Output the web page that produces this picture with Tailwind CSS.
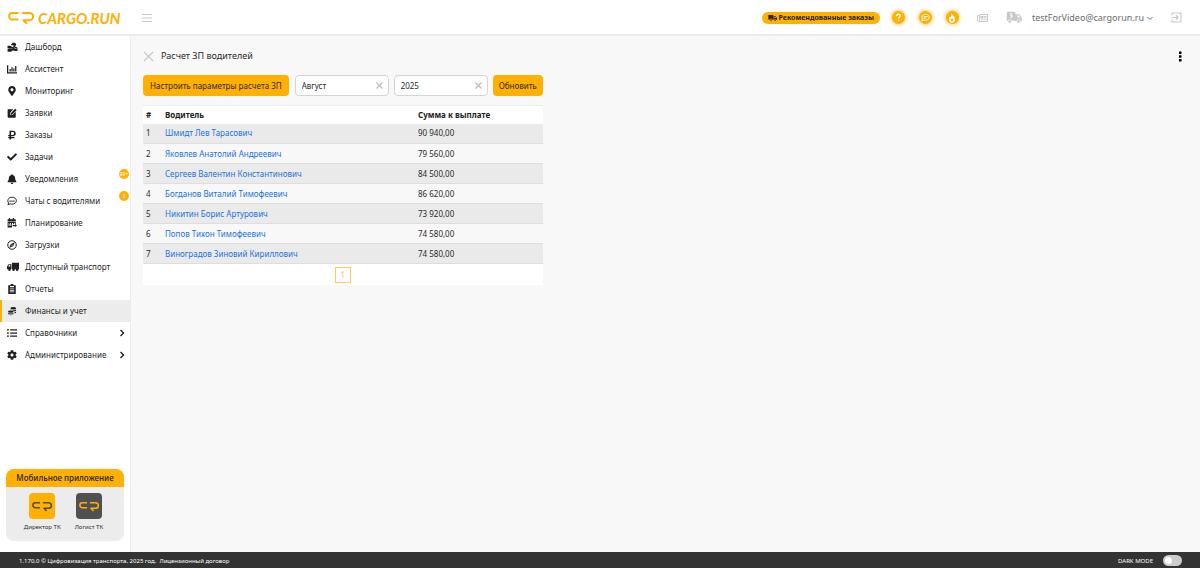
<!DOCTYPE html>
<html lang="ru">
  <head>
    <meta charset="UTF-8" />
    <meta name="viewport" content="width=device-width, initial-scale=1.0" />
    <title>Расчет ЗП водителей | CARGO.RUN</title>
    <script src="https://cdn.jsdelivr.net/npm/@tailwindcss/browser@4"></script>
  </head>

  <body class="min-h-screen flex flex-col bg-[#f8f8f8] font-['Noto_Sans',sans-serif] text-[8px] leading-[12px] text-[#2b2b2b]">
    <!-- Shared shapes -->
    <svg class="hidden">
      <symbol id="mark" viewBox="0 0 26 14">
        <path d="M10.500 2H4.200a3 3 0 0 0-3 3v.600a3 3 0 0 0 3 3h6.300M14.200 2H21.500a3.500 3.500 0 0 1 0 7.200H15.500l3.500 3.600" fill="none" stroke="currentColor" stroke-width="2" stroke-linecap="butt" stroke-linejoin="round" />
      </symbol>
      <symbol id="truck" viewBox="0 0 24 20">
        <path d="M1 2h13v12h-3a3 3 0 0 0-6 0H1zM15 5h5l4 5v5h-2a3 3 0 0 0-6 0h-1zM17 7v3h5l-2.500-3z" fill-rule="evenodd" fill="currentColor" />
        <circle cx="8" cy="15.500" r="2.200" fill="currentColor" />
        <circle cx="19" cy="15.500" r="2.200" fill="currentColor" />
      </symbol>
    </svg>

    <!-- Header -->
    <header class="h-9 shrink-0 flex items-center bg-white border-b-2 border-[#ececec] pt-px pl-2 pr-[18px] text-[#c8c8c8]">
      <a href="#" class="flex items-center gap-1 text-[#fdb000]">
        <svg class="w-[26px] h-[14px]"><use href="#mark" /></svg>
        <span class="w-[86px] font-['Lato',sans-serif] font-bold italic text-[15px] leading-[16px]">CARGO.RUN</span>
      </a>
      <button class="ml-[18px]" aria-label="Меню">
        <svg class="w-[10px] h-[10px]" viewBox="0 0 10 10" fill="none" stroke="currentColor" stroke-width="1.200"><path d="M0 1.500h10M0 5h10M0 8.500h10" /></svg>
      </button>

      <div class="ml-auto flex items-center">
        <button class="h-3 flex items-center gap-[2px] px-[6px] rounded-full bg-[#ffb000] text-[#222] text-[7px] font-bold leading-[12px] whitespace-nowrap">
          <svg class="w-[9px] h-[8px]"><use href="#truck" /></svg>
          Рекомендованные заказы
        </button>
        <button class="ml-3 size-[13px] rounded-full bg-[#ffb000] text-white shadow-[0_0_4px_#ffb000] flex items-center justify-center" aria-label="Помощь">
          <svg class="size-[9px]" viewBox="0 0 10 10" fill="none" stroke="currentColor" stroke-width="1.600"><path d="M3 3.400C3 .6 7.200.8 7 3.200 6.900 4.600 5 4.600 5 6.300M5 7.500v1.500" /></svg>
        </button>
        <button class="ml-[14px] size-[13px] rounded-full bg-[#ffb000] text-white shadow-[0_0_4px_#ffb000] flex items-center justify-center" aria-label="Чат">
          <svg class="size-[9px]" viewBox="0 0 16 16" fill="none" stroke="currentColor" stroke-width="1.700"><path d="M8 2c4 0 6.500 2.300 6.500 5.500S12 13 8 13c-1 0-2-.2-3-.5L1.500 14l1-3.500C.2 6 3 2 8 2z" /><path d="M4.500 6.200h7M4.500 9h5" /></svg>
        </button>
        <button class="ml-[14px] size-[13px] rounded-full bg-[#ffb000] text-white shadow-[0_0_4px_#ffb000] flex items-center justify-center" aria-label="Новинки">
          <svg class="size-[10px]" viewBox="0 0 16 16" fill="currentColor"><path fill-rule="evenodd" d="M7 0c1 3 6 5 6 10a5 5.500 0 0 1-10 0c0-2 1-3.500 2-4.500L6 7c1-2 1.500-4 1-7zM8 8c-1 1.500-2 2.200-2 3.500a2 2 0 0 0 4 0C10 10.200 9 9.500 8 8z" /></svg>
        </button>
        <button class="ml-[18px]" aria-label="Новости">
          <svg class="w-[11px] h-[10px]" viewBox="0 0 22 18"><path d="M5 2h16v14H4c-2 0-3-1-3-3V4h4v9c0 2-1 3-2 3" fill="none" stroke="currentColor" stroke-width="2" /><path d="M7 5h6v5H7zM14 5h5v1.800h-5zM14 8.200h5V10h-5zM7 11.800h12v1.800H7z" fill="currentColor" /></svg>
        </button>
        <button class="ml-[18px]" aria-label="Транспорт">
          <svg class="w-4 h-[13px]" viewBox="0 0 24 20"><path d="M2 1h11l1 1v13H1V2zM14 5h6l4 5v6H14zM17 7v3h5l-2.500-3z" fill-rule="evenodd" fill="currentColor" /><circle cx="5.500" cy="16" r="2.700" fill="currentColor" stroke="#fff" /><circle cx="19" cy="16" r="2.700" fill="currentColor" stroke="#fff" /><path d="M9.500 4.500H6.500v2.500h3v2.500H5.500M7.700 3v8" fill="none" stroke="#fff" /></svg>
        </button>
        <button class="ml-[10px] flex items-center gap-[3px] text-[9px] leading-[14px] text-[#6b6b6b]">
          testForVideo@cargorun.ru
          <svg class="size-[6px]" viewBox="0 0 6 6" fill="none" stroke="currentColor"><path d="M.5 2L3 4.500 5.500 2" /></svg>
        </button>
        <button class="ml-[18px]" aria-label="Выход">
          <svg class="size-[11px]" viewBox="0 0 22 22" fill="none" stroke="currentColor" stroke-width="2.200"><path d="M2 7V2h18v18H2v-5M1 11h13M10 6.500l4.500 4.500-4.500 4.500" /></svg>
        </button>
      </div>
    </header>

    <div class="flex-1 flex">
      <!-- Sidebar -->
      <aside class="w-[131px] shrink-0 flex flex-col bg-white border-r border-[#ececec]">
        <nav class="flex flex-col text-[#1f1f1f] *:h-[22px] *:flex *:items-center *:gap-2 *:pl-[7px] *:pr-1 *:relative *:whitespace-nowrap [&_svg]:shrink-0">
          <a href="#">
            <svg class="w-[11px] h-[10px] -mr-px" viewBox="0 0 16 16" fill="currentColor"><path d="M0 12c3-2 4 0 6-1s3-2 5-1 3 1 5 0v4c-2 1-3 1-5 0s-3 0-5 1-4 0-6 0zM0 6h4l4 2h5c2 0 3 1 3 2-3 0-4-1-6-1S4 12 0 10zM5 5l3-4h4l2 3-2 4H9l1-3H7z" /></svg>
            Дашборд
          </a>
          <a href="#">
            <svg class="size-[10px]" viewBox="0 0 16 16" fill="none" stroke="currentColor" stroke-width="2"><path d="M1 2v12h15M5 12V8M8 12V5M11 12V7M14 12V3" /></svg>
            Ассистент
          </a>
          <a href="#">
            <svg class="size-[10px]" viewBox="-64 0 512 512" fill="currentColor"><path d="M172.268 501.670C26.970 291.031 0 269.413 0 192 0 85.961 85.961 0 192 0s192 85.961 192 192c0 77.413-26.970 99.031-172.268 309.670-9.535 13.774-29.930 13.773-39.464 0zM192 272c44.183 0 80-35.817 80-80s-35.817-80-80-80-80 35.817-80 80 35.817 80 80 80z" /></svg>
            Мониторинг
          </a>
          <a href="#">
            <svg class="size-[10px]" viewBox="0 0 16 16"><path d="M2 2h8L5 7.500V11h3.500L14 6v8a1.500 1.500 0 0 1-1.500 1.500h-10A1.500 1.500 0 0 1 1 14V3.500A1.500 1.500 0 0 1 2 2zM6 8.500L13 1l2.500 2.500-7.500 7-2 .5z" fill="currentColor" /></svg>
            Заявки
          </a>
          <a href="#">
            <svg class="size-[10px]" viewBox="-64 0 512 512" fill="currentColor"><path d="M239.360 320C324.480 320 384 260.542 384 175.071S324.480 32 239.360 32H76c-6.627 0-12 5.373-12 12v206.632H12c-6.627 0-12 5.373-12 12V308c0 6.627 5.373 12 12 12h52v32H12c-6.627 0-12 5.373-12 12v40c0 6.627 5.373 12 12 12h52v52c0 6.627 5.373 12 12 12h58.560c6.627 0 12-5.373 12-12v-52H308c6.627 0 12-5.373 12-12v-40c0-6.627-5.373-12-12-12H146.560v-32h92.800zm-92.800-219.252h78.720c46.720 0 74.880 29.110 74.880 74.323 0 45.832-28.160 75.561-76.160 75.561h-77.440V100.748z" /></svg>
            Заказы
          </a>
          <a href="#">
            <svg class="size-[10px]" viewBox="0 0 512 512" fill="currentColor"><path d="M173.898 439.404l-166.400-166.400c-9.997-9.997-9.997-26.206 0-36.204l36.203-36.204c9.997-9.998 26.207-9.998 36.204 0L192 312.690 432.095 72.596c9.997-9.997 26.207-9.997 36.204 0l36.203 36.204c9.997 9.997 9.997 26.206 0 36.204l-294.400 294.401c-9.998 9.997-26.207 9.997-36.204-.001z" /></svg>
            Задачи
          </a>
          <a href="#">
            <svg class="size-[10px]" viewBox="-32 0 512 512" fill="currentColor"><path d="M224 512c35.320 0 63.970-28.650 63.970-64H160.030c0 35.350 28.650 64 63.970 64zm215.390-149.710c-19.320-20.760-55.470-51.990-55.470-154.290 0-77.700-54.480-139.900-127.940-155.160V32c0-17.670-14.320-32-31.980-32s-31.980 14.330-31.980 32v20.840C118.560 68.100 64.080 130.300 64.080 208c0 102.300-36.150 133.530-55.470 154.290-6 6.450-8.660 14.160-8.610 21.710.11 16.400 12.980 32 32.100 32h383.800c19.120 0 32-15.600 32.100-32 .05-7.550-2.610-15.270-8.610-21.710z" /></svg>
            Уведомления
            <span class="absolute right-[1px] top-[1px] size-[10px] rounded-full bg-[#ffb000] text-white text-[5px] leading-[10px] text-center">99+</span>
          </a>
          <a href="#">
            <svg class="size-[10px]" viewBox="0 0 16 16"><path d="M8 2c4 0 7 2.300 7 5.500S12 13 8 13c-1 0-2-.2-3-.5L1.500 14l1-3C-.5 7 2.500 2 8 2z" fill="none" stroke="currentColor" stroke-width="1.500" /><path d="M4 7h2v2H4zM7 7h2v2H7zM10 7h2v2h-2z" fill="currentColor" /></svg>
            Чаты с водителями
            <span class="absolute right-[1px] top-[1px] size-[10px] rounded-full bg-[#ffb000] text-white text-[5px] leading-[10px] text-center">3</span>
          </a>
          <a href="#">
            <svg class="size-[10px]" viewBox="0 0 16 16" fill="currentColor"><path fill-rule="evenodd" d="M3 0h2v2h4V0h2v2h3v3H1V2h2zM1 6h13v4h-1.500V8H11v2H9.500V8H8v2H6.500V8H5v2H3.500V8H2.500v4.500H8V15H1zM9 11h4V9.500l3 2.500-3 2.500V13H9zM4 10.500h1.500V12H4zM6.500 10.500H8V12H6.500z" /></svg>
            Планирование
          </a>
          <a href="#">
            <svg class="size-[10px]" viewBox="0 0 16 16"><circle cx="8" cy="8" r="6.800" fill="none" stroke="currentColor" stroke-width="1.600" /><path fill-rule="evenodd" d="M12.500 3.500L9.800 9.800 3.500 12.500l2.700-6.300zM8 7a1 1 0 1 0 0 2 1 1 0 0 0 0-2z" fill="currentColor" /></svg>
            Загрузки
          </a>
          <a href="#">
            <svg class="w-[12px] h-[10px] -mr-[2px]" viewBox="0 0 22 18" fill="currentColor"><path fill-rule="evenodd" d="M9 1h13v12H9zM8 4v9H0V8l3-4zM6 5.500H4L2 8h4z" /><circle cx="4.500" cy="14" r="2.300" /><circle cx="12" cy="14" r="2.300" /><circle cx="18.500" cy="14" r="2.300" /></svg>
            Доступный транспорт
          </a>
          <a href="#">
            <svg class="size-[10px]" viewBox="0 0 16 16" fill="currentColor"><path fill-rule="evenodd" d="M2 2h3.500a2.500 2.500 0 0 1 5 0H14v14H2zM5 3v2h6V3zM4.500 7v1.200h7V7zM4.500 9.500v1.200h7V9.500zM4.500 12v1.200h7V12z" /></svg>
            Отчеты
          </a>
          <a href="#" class="bg-[#ececec] shadow-[inset_2px_0_#ffb000]">
            <svg class="size-[10px]" viewBox="0 0 16 16" fill="currentColor"><ellipse cx="10" cy="3.500" rx="4.500" ry="2" /><path d="M5.500 5.500c2 1.500 7 1.500 9 0V7c-1 1-2 1.300-4 1.500C10 7 8 6.500 5.500 6.500zM12 9.700c1.500-.2 2-.5 2.500-1v1.500c-1 1-1.500 1.200-2.500 1.500z" /><ellipse cx="6" cy="9" rx="4.500" ry="1.800" /><path d="M1.500 10.800c2 1.500 7 1.500 9 0V12c-2 1.500-7 1.500-9 0zM1.500 13c2 1.200 7 1.200 9 0v.7c-2 1.600-7 1.600-9 0z" /></svg>
            Финансы и учет
          </a>
          <a href="#">
            <svg class="size-[10px]" viewBox="0 0 16 16" fill="none" stroke="currentColor" stroke-width="2"><path d="M0 3h3M0 8h3M0 13h3M5 3h11M5 8h11M5 13h11" /></svg>
            Справочники
            <svg class="ml-auto size-2" viewBox="0 0 8 8" fill="none" stroke="currentColor" stroke-width="1.400"><path d="M2.500 1l3 3-3 3" /></svg>
          </a>
          <a href="#">
            <svg class="size-[10px]" viewBox="0 0 512 512" fill="currentColor"><path d="M487.400 315.700l-42.600-24.600c4.300-23.200 4.300-47 0-70.200l42.600-24.600c4.900-2.800 7.100-8.600 5.500-14-11.100-35.600-30-67.800-54.700-94.600-3.800-4.100-10-5.100-14.800-2.300L380.800 110c-17.900-15.400-38.500-27.300-60.800-35.100V25.800c0-5.600-3.900-10.500-9.400-11.700-36.700-8.200-74.300-7.800-109.200 0-5.500 1.200-9.400 6.100-9.400 11.700V75c-22.200 7.900-42.800 19.800-60.800 35.100L88.700 85.500c-4.900-2.800-11-1.900-14.800 2.300-24.700 26.700-43.600 58.900-54.700 94.600-1.700 5.400.6 11.200 5.500 14L67.300 221c-4.300 23.200-4.300 47 0 70.200l-42.600 24.600c-4.900 2.800-7.100 8.600-5.500 14 11.100 35.600 30 67.800 54.700 94.600 3.800 4.100 10 5.100 14.800 2.300l42.600-24.600c17.900 15.400 38.500 27.300 60.800 35.100v49.200c0 5.600 3.900 10.500 9.400 11.700 36.700 8.200 74.300 7.800 109.200 0 5.500-1.200 9.400-6.100 9.400-11.700v-49.200c22.200-7.900 42.800-19.800 60.800-35.100l42.600 24.600c4.900 2.800 11 1.900 14.800-2.300 24.700-26.700 43.600-58.900 54.700-94.600 1.500-5.500-.7-11.300-5.600-14.100zM256 336c-44.100 0-80-35.900-80-80s35.900-80 80-80 80 35.900 80 80-35.900 80-80 80z" /></svg>
            Администрирование
            <svg class="ml-auto size-2" viewBox="0 0 8 8" fill="none" stroke="currentColor" stroke-width="1.400"><path d="M2.500 1l3 3-3 3" /></svg>
          </a>
        </nav>

        <div class="mt-auto mb-[11px] mx-[6px] rounded-lg overflow-hidden bg-[#ececec]">
          <h2 class="h-[18px] leading-[18px] bg-[#ffb000] text-center font-medium text-[#222] whitespace-nowrap">Мобильное приложение</h2>
          <div class="flex justify-center gap-[14px] pt-[6px] pr-[3px] pb-[10px] text-[6px] leading-[8px] whitespace-nowrap">
            <a href="#" class="flex flex-col items-center gap-1">
              <span class="size-[26px] rounded bg-[#ffb000] text-[#505050] flex items-center justify-center"><svg class="w-5 h-[11px]"><use href="#mark" /></svg></span>
              Директор ТК
            </a>
            <a href="#" class="flex flex-col items-center gap-1">
              <span class="size-[26px] rounded bg-[#505050] text-[#ffb000] flex items-center justify-center"><svg class="w-5 h-[11px]"><use href="#mark" /></svg></span>
              Логист ТК
            </a>
          </div>
        </div>
      </aside>

      <!-- Content -->
      <main class="flex-1 pl-3 pr-4 pt-[13px]">
        <div class="flex items-center h-[14px]">
          <button class="text-[#c8c8c8]" aria-label="Закрыть">
            <svg class="size-[11px]" viewBox="0 0 11 11" fill="none" stroke="currentColor" stroke-width="1.200"><path d="M1 1l9 9M10 1l-9 9" /></svg>
          </button>
          <h1 class="ml-[7px] text-[9px]">Расчет ЗП водителей</h1>
          <button class="ml-auto text-black" aria-label="Действия">
            <svg class="w-2 h-[11px]" viewBox="0 0 8 11" fill="currentColor"><path d="M3 .5h2.500V3H3zM3 4.300h2.500v2.400H3zM3 8h2.500v2.500H3z" /></svg>
          </button>
        </div>

        <div class="w-fit">
          <div class="mt-3 flex items-center">
            <button class="h-[21px] px-[7px] rounded-sm bg-[#ffb000] whitespace-nowrap">Настроить параметры расчета ЗП</button>
            <div class="relative ml-[6px]">
              <input type="text" aria-label="Месяц" value="Август" class="block w-[94px] h-[21px] pl-[6px] pr-4 bg-white border border-[#d4d4d4] rounded-sm" />
              <button class="absolute right-[6px] top-[7px] text-[#bbb]" aria-label="Очистить месяц">
                <svg class="size-[7px]" viewBox="0 0 7 7" fill="none" stroke="currentColor" stroke-width="1.200"><path d="M.5.5l6 6M6.500.5l-6 6" /></svg>
              </button>
            </div>
            <div class="relative ml-[5px]">
              <input type="text" aria-label="Год" value="2025" class="block w-[94px] h-[21px] pl-[6px] pr-4 bg-white border border-[#d4d4d4] rounded-sm" />
              <button class="absolute right-[6px] top-[7px] text-[#bbb]" aria-label="Очистить год">
                <svg class="size-[7px]" viewBox="0 0 7 7" fill="none" stroke="currentColor" stroke-width="1.200"><path d="M.5.5l6 6M6.500.5l-6 6" /></svg>
              </button>
            </div>
            <button class="ml-[5px] h-[21px] px-[6px] rounded-sm bg-[#ffb000]">Обновить</button>
          </div>

          <table class="mt-[9px] w-full text-left border-t border-[#ececec]">
            <thead class="bg-white text-[#222]">
              <tr class="h-[18px]">
                <th class="w-[19px] pl-[3px]">#</th>
                <th class="w-[253px] pl-[3px]">Водитель</th>
                <th class="pl-[3px]">Сумма к выплате</th>
              </tr>
            </thead>
            <tbody class="*:h-[20px] *:border-b *:border-[#dedede] *:odd:bg-[#eaeaea] [&_td]:pl-[3px] [&_a]:text-[#1a73e0]">
              <tr><td>1</td><td><a href="#">Шмидт Лев Тарасович</a></td><td>90 940,00</td></tr>
              <tr><td>2</td><td><a href="#">Яковлев Анатолий Андреевич</a></td><td>79 560,00</td></tr>
              <tr><td>3</td><td><a href="#">Сергеев Валентин Константинович</a></td><td>84 500,00</td></tr>
              <tr><td>4</td><td><a href="#">Богданов Виталий Тимофеевич</a></td><td>86 620,00</td></tr>
              <tr><td>5</td><td><a href="#">Никитин Борис Артурович</a></td><td>73 920,00</td></tr>
              <tr><td>6</td><td><a href="#">Попов Тихон Тимофеевич</a></td><td>74 580,00</td></tr>
              <tr><td>7</td><td><a href="#">Виноградов Зиновий Кириллович</a></td><td>74 580,00</td></tr>
            </tbody>
          </table>
          <div class="bg-white h-[21px] flex items-center justify-center">
            <button class="size-4 border border-[#ffc95c] text-[#ffb940] leading-[14px]">1</button>
          </div>
        </div>
      </main>
    </div>

    <!-- Footer -->
    <footer class="h-4 shrink-0 flex items-center justify-between bg-[#333] pt-px pl-[19px] pr-[18px] text-white text-[6px] leading-[8px]">
      <p>1.170.0 © Цифровизация транспорта, 2025 год. &nbsp;<a href="#">Лицензионный договор</a></p>
      <label class="flex items-center gap-[10px]">
        DARK MODE
        <input type="checkbox" class="appearance-none w-[19px] h-[11px] rounded-full bg-[#ccc] p-[2px] before:block before:size-[7px] before:rounded-full before:bg-white checked:before:ml-2" />
      </label>
    </footer>
  </body>
</html>
